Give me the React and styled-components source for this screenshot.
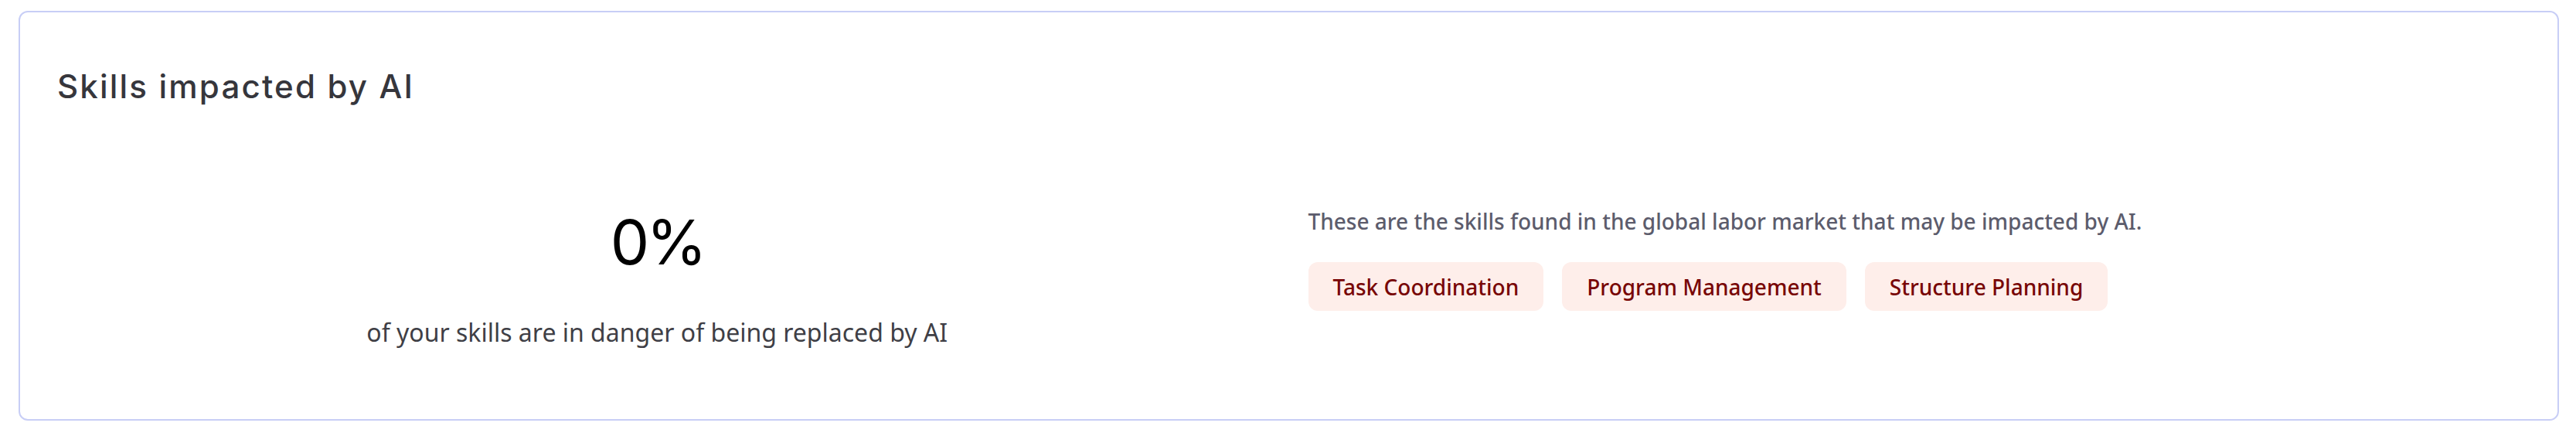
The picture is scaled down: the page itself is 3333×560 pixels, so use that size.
import React from "react";
import styled, { createGlobalStyle } from "styled-components";

const GlobalStyle = createGlobalStyle`
  html, body {
    margin: 0;
    padding: 0;
    background: #ffffff;
  }
  body {
    font-family: "Noto Sans", "Open Sans", sans-serif;
  }
`;

const Page = styled.div`
  padding: 14px 22px 16px 24px;
`;

const Card = styled.section`
  box-sizing: border-box;
  height: 530px;
  border: 2px solid #c8cef6;
  border-radius: 12px;
  background: #ffffff;
  padding: 72px 48px 48px 48px;
`;

const Title = styled.h2`
  margin: 0;
  font-family: Inter, "Noto Sans", sans-serif;
  font-size: 42px;
  line-height: 48px;
  font-weight: 500;
  letter-spacing: 2.2px;
  color: #36363c;
`;

const Body = styled.div`
  display: grid;
  grid-template-columns: 1fr 1fr;
  column-gap: 50px;
  align-items: start;
  margin-top: 130px;
`;

const Score = styled.div`
  display: flex;
  flex-direction: column;
  align-items: center;
  padding-right: 16px;
`;

const Percent = styled.div`
  font-family: Inter, "Noto Sans", sans-serif;
  font-size: 80px;
  line-height: 94px;
  font-weight: 400;
  letter-spacing: -4px;
  color: #000000;
`;

const Caption = styled.p`
  margin: 46px 0 0 0;
  font-size: 32px;
  line-height: 48px;
  font-weight: 400;
  color: #3f3f46;
`;

const Skills = styled.div`
  display: flex;
  flex-direction: column;
`;

const Intro = styled.p`
  margin: 0;
  font-size: 28px;
  line-height: 40px;
  font-weight: 500;
  color: #5c5c6c;
`;

const ChipRow = styled.div`
  display: flex;
  gap: 24px;
  margin-top: 33px;
`;

const Chip = styled.span`
  padding: 11.5px 32px;
  border-radius: 12px;
  background: #feeeea;
  color: #780606;
  font-size: 28px;
  line-height: 40px;
  font-weight: 500;
  white-space: nowrap;
`;

const skills = ["Task Coordination", "Program Management", "Structure Planning"];

const App = () => {
  return (
    <Page>
      <GlobalStyle />
      <Card>
        <Title>Skills impacted by AI</Title>
        <Body>
          <Score>
            <Percent>0%</Percent>
            <Caption>of your skills are in danger of being replaced by AI</Caption>
          </Score>
          <Skills>
            <Intro>
              These are the skills found in the global labor market that may be
              impacted by AI.
            </Intro>
            <ChipRow>
              {skills.map((s) => (
                <Chip key={s}>{s}</Chip>
              ))}
            </ChipRow>
          </Skills>
        </Body>
      </Card>
    </Page>
  );
};

export default App;
